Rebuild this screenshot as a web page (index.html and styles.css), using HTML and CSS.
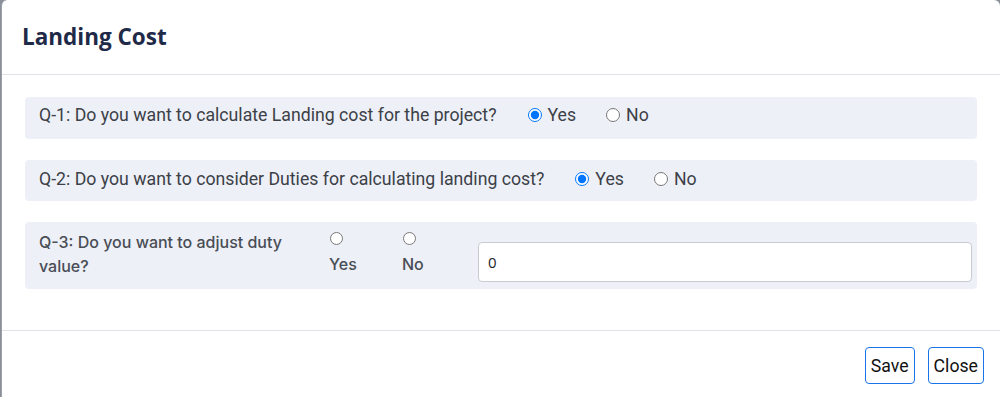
FILE: index.html
```html
<!DOCTYPE html>
<html>
<head>
<meta charset="utf-8">
<link rel="stylesheet" href="styles.css">
</head>
<body>
<div class="modal">
  <div class="modal-header">
    <h5 class="modal-title">Landing Cost</h5>
  </div>
  <div class="modal-body">
    <div class="q-row">
      <span class="q-text">Q-1: Do you want to calculate Landing cost for the project?</span>
      <label class="opt"><input type="radio" name="q1" checked> Yes</label>
      <label class="opt"><input type="radio" name="q1"> No</label>
    </div>
    <div class="q-row q-row-2">
      <span class="q-text">Q-2: Do you want to consider Duties for calculating landing cost?</span>
      <label class="opt"><input type="radio" name="q2" checked> Yes</label>
      <label class="opt"><input type="radio" name="q2"> No</label>
    </div>
    <div class="q-row q-grid">
      <span class="q3-text">Q-3: Do you want to adjust duty value?</span>
      <label class="opt-stack"><input type="radio" name="q3"><span>Yes</span></label>
      <label class="opt-stack"><input type="radio" name="q3"><span>No</span></label>
      <input class="num-input" type="text" value="0">
    </div>
  </div>
  <div class="modal-footer">
    <button class="btn">Save</button>
    <button class="btn">Close</button>
  </div>
</div>
</body>
</html>
```
FILE: styles.css
```css
html, body {
  margin: 0;
  padding: 0;
  height: 397px;
  overflow: hidden;
}
body {
  background: #8a8f99;
}
.modal {
  margin-left: 1px;
  height: 397px;
  background: #fff;
  border-left: 1px solid #9aa0a8;
  border-top-left-radius: 6px;
  border-top-right-radius: 6px;
  display: flex;
  flex-direction: column;
}
.modal-header {
  height: 75px;
  box-sizing: border-box;
  border-bottom: 1px solid #dee2e6;
  padding: 0 0 0 20px;
  display: flex;
  align-items: center;
}
.modal-title {
  margin: 0 0 2px 0;
  font-family: "Open Sans", sans-serif;
  font-weight: 700;
  font-size: 22.5px;
  color: #1f2a48;
}
.modal-body {
  flex: 1;
  padding: 22px 23px 0 23px;
  display: flex;
  flex-direction: column;
  gap: 21px;
}
.q-row {
  background: #edf0f7;
  border-radius: 4px;
  height: 42px;
  box-sizing: border-box;
  display: flex;
  align-items: center;
  padding-left: 14px;
  padding-bottom: 6px;
  font-family: Roboto, sans-serif;
  font-size: 17.7px;
  color: #3c4047;
}
.q-row-2 {
  height: 41px;
  padding-bottom: 4px;
}
.q-text {
  margin-right: 31px;
}
.opt {
  display: inline-flex;
  align-items: center;
  margin-right: 30px;
}
.opt input {
  margin: 0 6px 0 0;
  width: 14px;
  height: 14px;
}
.q-grid {
  height: 67px;
  display: grid;
  grid-template-columns: 290px 73px 76px 1fr;
  align-items: center;
  padding-right: 5px;
  padding-bottom: 0;
}
.q3-text {
  font-family: Inter, Roboto, sans-serif;
  font-weight: 500;
  font-size: 16px;
  line-height: 24px;
  color: #494d55;
  padding-right: 20px;
  margin-top: -4px;
}
.opt-stack {
  display: flex;
  flex-direction: column;
  align-items: flex-start;
  font-family: Inter, Roboto, sans-serif;
  font-weight: 500;
  font-size: 16px;
  color: #494d55;
  margin-top: -6px;
}
.opt-stack input {
  margin: 0 0 9px 1px;
  width: 13px;
  height: 13px;
}
.num-input {
  height: 40px;
  box-sizing: border-box;
  margin-top: 12px;
  border: 1px solid #c8cbd0;
  border-radius: 4px;
  padding: 0 9px;
  font-family: "Open Sans", sans-serif;
  font-size: 15px;
  color: #212529;
  background: #fff;
  outline: none;
}
.modal-footer {
  height: 67px;
  box-sizing: border-box;
  border-top: 1px solid #dee2e6;
  display: flex;
  justify-content: flex-end;
  align-items: flex-start;
  padding: 16px 16px 0 0;
  gap: 13px;
}
.btn {
  height: 37px;
  padding: 0 5px;
  background: #fff;
  border: 1px solid #1a73e8;
  border-radius: 4px;
  font-family: Roboto, sans-serif;
  font-size: 17.7px;
  color: #111;
}
```
